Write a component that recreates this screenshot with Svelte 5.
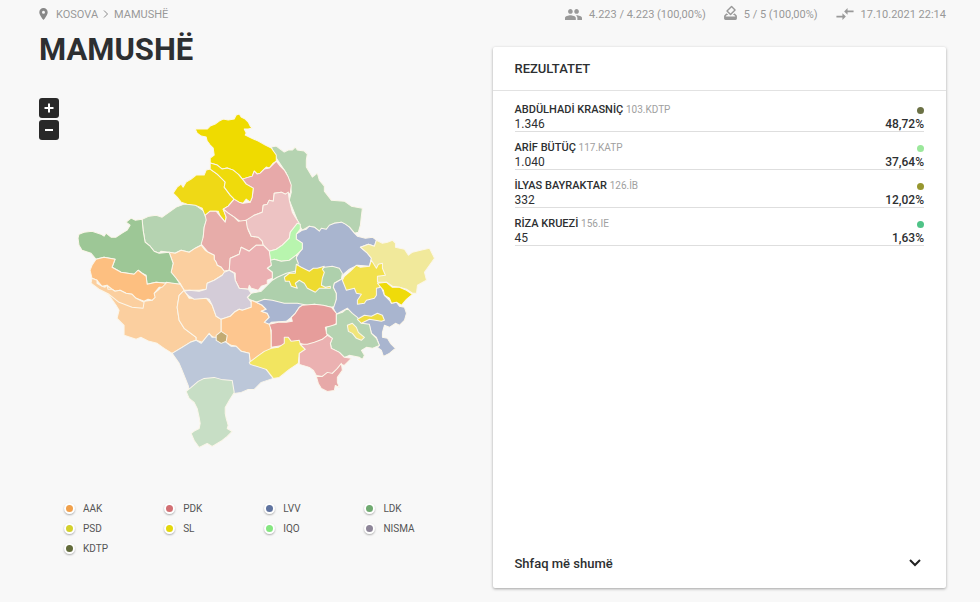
<script lang="ts">
  interface Region {
    name: string;
    fill: string;
    points: string;
  }

  interface Candidate {
    name: string;
    list: string;
    votes: string;
    percent: string;
    color: string;
  }

  const legend = [
    { label: 'AAK', color: '#f0a04b' },
    { label: 'PDK', color: '#d26f73' },
    { label: 'LVV', color: '#5f739f' },
    { label: 'LDK', color: '#6faa70' },
    { label: 'PSD', color: '#d3d02c' },
    { label: 'SL', color: '#e3d70c' },
    { label: 'IQO', color: '#85e680' },
    { label: 'NISMA', color: '#8d8598' },
    { label: 'KDTP', color: '#626b3a' }
  ];

  const candidates: Candidate[] = [
    { name: 'ABDÜLHADİ KRASNİÇ', list: '103.KDTP', votes: '1.346', percent: '48,72%', color: '#6b7145' },
    { name: 'ARİF BÜTÜÇ', list: '117.KATP', votes: '1.040', percent: '37,64%', color: '#9be89b' },
    { name: 'İLYAS BAYRAKTAR', list: '126.İB', votes: '332', percent: '12,02%', color: '#97972f' },
    { name: 'RİZA KRUEZİ', list: '156.IE', votes: '45', percent: '1,63%', color: '#4fc387' }
  ];

  // Drawn in order, small municipalities on top of their neighbours
  const regions: Region[] = [
    { name: 'Podujevë', fill: '#b5d3b1', points: '272,147 277,146 281,149 285,152 289,150 293,150 296,147 298,150 305,151 308,154 307,160 307,167 310,172 313,177 318,173 320,180 325,186 325,191 332,200 345,201 352,206 363,208 362,216 361,225 359,232 355,233 350,227 342,222 335,223 327,229 320,231 315,227 310,226 303,230 300,225 296,215 290,200 292,192 291,183 287,173 277,158' },
    { name: 'Leposaviq', fill: '#efdb00', points: '196,129 208,129 211,126 216,124 220,121 224,119 229,120 235,119 237,115 240,114 242,117 246,119 249,122 251,126 253,128 249,129 245,129 247,133 246,135 252,138 259,141 266,145 272,148 277,155 277,161 274,163 270,168 267,167 265,169 261,173 258,174 255,171 253,176 243,179 240,175 237,173 234,170 228,168 223,169 218,165 211,163 211,158 215,155 214,148 211,145 208,141 207,137 202,136 198,133' },
    { name: 'Istog', fill: '#b5d3b1', points: '143,219 150,216 157,215 163,217 170,212 177,207 185,204 195,204 206,212 208,218 205,227 204,237 206,240 202,245 198,247 190,252 182,250 176,253 170,252 162,251 160,253 155,251 151,246 146,242 144,230' },
    { name: 'Zubin Potok', fill: '#efd916', points: '174,193 178,187 182,184 184,187 187,182 192,179 197,175 205,175 207,170 211,169 218,174 223,178 226,182 225,187 231,195 235,199 229,206 224,209 227,217 226,222 221,216 219,211 217,211 211,211 206,216 203,208 196,205 188,204 182,202 178,197' },
    { name: 'Mitrovicë', fill: '#e7a9a9', points: '277,161 281,166 285,170 289,177 292,185 291,193 286,194 282,192 275,193 274,201 270,200 268,204 264,205 263,212 255,215 252,218 247,221 242,222 235,217 229,213 224,209 229,206 235,199 240,202 244,203 251,202 253,197 254,188 247,184 243,179 253,176 255,171 258,174 261,173 265,169 270,168' },
    { name: 'Mitrovicë Veriore', fill: '#efdb0c', points: '211,163 218,165 223,169 228,168 234,170 239,174 244,180 247,184 254,188 253,197 251,202 247,199 244,203 240,202 235,199 231,195 225,187 226,182 218,174 211,169' },
    { name: 'Skënderaj', fill: '#e7aca9', points: '206,215 211,211 217,211 221,216 226,222 227,217 224,209 229,213 235,217 239,221 247,220 249,230 252,236 259,237 263,241 264,245 257,245 250,251 242,247 240,254 231,258 230,270 225,271 222,267 218,265 217,262 215,259 215,255 209,252 202,244 204,237 205,227 207,220' },
    { name: 'Vushtrri', fill: '#edc3c3', points: '274,201 275,193 282,192 286,194 289,192 290,200 293,212 296,217 300,223 298,224 291,232 290,238 283,245 277,249 270,251 267,248 264,245 263,241 259,237 252,236 248,227 247,220 255,215 263,212 264,205 268,204 270,200' },
    { name: 'Prishtinë', fill: '#a9b5cf', points: '297,234 303,230 307,229 310,226 315,227 320,231 322,228 327,229 330,225 335,223 342,222 346,224 350,227 355,233 358,236 366,238 373,237 377,240 375,246 369,244 361,247 368,253 372,258 371,266 358,265 350,269 343,275 325,275 310,272 297,266 297,257 303,248 303,243 297,239' },
    { name: 'Obiliq', fill: '#b8f5ae', points: '298,223 301,224 301,229 297,234 297,239 303,243 303,249 298,254 294,258 290,260 282,261 275,259 271,261 270,251 277,249 283,245 290,238 291,232' },
    { name: 'Fushë Kosovë', fill: '#aed0ac', points: '271,260 275,259 282,261 290,260 298,254 297,258 299,263 296,273 290,275 280,278 273,280 273,272 268,268 272,265' },
    { name: 'Lipjan', fill: '#aed0ac', points: '248,298 252,293 262,291 268,285 273,280 278,277 287,273 300,270 318,272 325,267 333,266 340,268 343,273 342,279 335,283 334,287 337,293 337,299 336,306 332,307 327,306 315,304 308,306 298,304 285,304 273,301 258,302 252,300' },
    { name: 'Graçanicë', fill: '#eedb2f', points: '285,277 290,273 296,273 297,264 302,267 310,271 314,268 318,268 325,266 323,269 325,272 323,278 322,285 326,287 331,286 331,288 320,288 316,292 312,290 308,288 305,283 300,280 296,283 298,288 292,286 290,281 286,281' },
    { name: 'Drenas', fill: '#ebb0b2', points: '270,251 267,248 264,245 257,245 250,251 242,247 240,254 231,258 230,270 236,273 236,280 240,288 249,289 250,285 252,288 259,290 262,286 268,284 268,280 273,278 273,272 268,268 272,265 271,258' },
    { name: 'Gjilan', fill: '#a9b5cf', points: '334,287 335,283 342,279 348,275 370,280 382,287 385,295 390,300 392,303 397,302 400,306 405,307 407,313 405,320 400,325 396,323 390,327 385,325 383,332 383,337 388,338 391,343 396,348 390,353 384,356 382,350 378,347 380,345 377,337 372,333 370,325 360,322 348,308 337,314 334,308 337,299 337,293' },
    { name: 'Kamenicë', fill: '#f1e99b', points: '361,247 369,244 375,246 377,240 383,243 388,242 393,240 396,243 396,247 405,249 409,255 413,252 421,250 430,248 435,258 430,265 425,272 427,280 418,285 417,293 413,293 407,289 400,287 393,286 387,282 378,282 377,276 370,266 372,258 368,253' },
    { name: 'Novobërdë', fill: '#f2e14c', points: '343,280 345,276 351,271 357,265 361,267 370,266 372,260 377,268 379,264 383,263 383,268 386,275 378,276 378,281 381,287 377,288 377,295 375,298 367,300 365,303 358,304 358,300 362,294 357,293 355,288 347,290' },
    { name: 'Ranillug', fill: '#efdb0a', points: '378,283 387,282 393,287 400,287 407,290 413,294 407,299 402,305 397,302 392,303 390,298 385,295 384,290' },
    { name: 'Klinë', fill: '#fbcf9f', points: '170,252 176,253 182,250 190,252 196,248 202,245 206,250 209,252 215,255 215,259 217,262 218,265 222,267 225,271 230,270 223,275 215,280 208,283 207,289 200,290 185,290 181,283 176,277 172,272 174,263' },
    { name: 'Pejë', fill: '#9dc796', points: '79,238 80,234 85,232 93,231 102,234 105,236 107,233 112,237 117,237 123,233 128,230 131,225 127,222 132,218 136,220 143,219 144,230 146,242 151,246 155,251 160,253 170,252 174,263 172,272 177,278 181,284 170,283 157,282 148,284 147,275 143,273 139,270 135,274 122,272 113,267 116,259 105,257 97,259 92,253 83,250 80,245' },
    { name: 'Gjakovë', fill: '#fbcf9f', points: '100,286 113,287 127,293 145,301 153,300 155,293 160,289 167,282 181,284 185,290 180,295 178,307 180,320 185,328 197,337 197,340 191,342 183,347 173,353 165,348 158,343 150,341 142,337 137,339 125,335 125,325 120,320 118,318 120,310 117,305 110,295' },
    { name: 'Deçan', fill: '#fdbf80', points: '97,259 105,257 116,259 113,267 122,272 135,274 139,270 143,273 147,276 148,284 157,282 167,283 163,287 160,287 155,293 156,297 153,300 149,299 145,301 137,298 133,294 127,293 121,290 116,291 113,289 108,285 103,286 98,280 93,278 91,270 93,265' },
    { name: 'Junik', fill: '#fbcf9f', points: '93,278 98,280 98,283 103,286 106,287 108,285 109,289 113,289 116,291 121,290 127,293 133,294 137,298 145,302 144,308 133,307 120,302 110,294 100,289 92,283' },
    { name: 'Rahovec', fill: '#fbcf9f', points: '185,290 190,298 207,298 213,305 217,316 222,319 222,335 216,338 210,334 203,342 197,340 197,337 185,328 180,320 178,307 180,295' },
    { name: 'Malishevë', fill: '#d4ccd8', points: '185,291 190,290 200,291 207,289 208,283 215,280 223,275 225,272 230,270 235,273 236,280 240,288 249,289 252,293 248,297 252,302 252,307 243,310 240,309 235,312 231,316 222,319 217,316 213,305 210,299 207,298 195,299 190,296' },
    { name: 'Suharekë', fill: '#fdc68f', points: '222,319 231,316 235,312 240,309 243,310 252,307 252,300 257,302 263,305 267,309 262,311 268,313 270,317 266,321 271,324 272,335 272,348 260,356 251,363 250,353 242,351 237,346 232,345 227,342 222,335' },
    { name: 'Shtime', fill: '#a9b5d0', points: '257,302 265,299 273,300 285,303 298,303 308,305 300,307 296,313 292,317 287,321 272,322 270,324 265,322 270,317 268,313 262,311 267,309 263,305' },
    { name: 'Ferizaj', fill: '#e69d9b', points: '303,305 315,304 324,305 332,307 337,313 337,323 333,326 326,327 328,335 323,339 315,343 307,345 300,343 285,345 272,347 272,330 270,324 279,322 287,322 293,321 292,317 296,313 300,307' },
    { name: 'Viti', fill: '#b5d3b1', points: '337,314 343,312 348,308 353,313 358,317 362,323 370,324 372,333 377,338 380,345 373,348 367,347 362,350 365,355 363,359 360,357 350,355 345,357 340,352 332,348 331,343 333,338 327,333 327,327 337,324' },
    { name: 'Partesh', fill: '#eedc40', points: '358,319 365,315 372,316 378,313 383,315 385,320 382,321 370,319 362,323' },
    { name: 'Kllokot', fill: '#f1e57a', points: '348,325 353,323 357,327 359,332 365,337 362,340 357,338 353,333 349,331' },
    { name: 'Prizren', fill: '#bcc7d9', points: '173,353 183,347 191,342 197,340 202,343 206,338 210,333 213,337 217,337 227,342 232,346 237,346 242,351 250,353 251,363 258,365 267,369 274,378 262,382 255,389 249,389 242,392 235,393 190,390 189,385 187,380 183,370 180,363' },
    { name: 'Shtërpcë', fill: '#f2e560', points: '250,362 258,356 265,351 272,348 279,347 285,343 285,337 289,337 292,341 300,340 301,344 306,349 300,353 299,363 290,369 285,373 280,377 274,378 267,369 251,364' },
    { name: 'Kaçanik', fill: '#ebb1b1', points: '301,344 308,344 315,342 323,339 328,335 333,338 331,343 332,348 340,352 345,357 352,358 345,365 342,364 338,369 333,373 328,373 323,376 317,375 314,370 310,367 300,364 300,353 306,349' },
    { name: 'Hani i Elezit', fill: '#e7a9a8', points: '317,376 323,376 328,372 333,373 338,368 342,363 343,370 338,377 338,382 340,387 336,385 335,390 328,391 322,388 319,383' },
    { name: 'Dragash', fill: '#c7dec5', points: '187,391 192,387 199,381 205,378 215,377 222,379 233,380 235,392 230,400 226,407 226,413 227,418 229,425 228,428 233,431 228,436 223,440 213,446 208,443 200,447 195,440 192,433 196,430 200,428 201,423 200,417 198,408 195,402 190,398' },
    { name: 'Mamushë', fill: '#c2aa72', points: '217,335 222,331 228,335 227,341 222,343 217,340' }
  ];
</script>

<div class="page">
  <header class="topbar">
    <nav class="breadcrumb">
      <svg class="pin" viewBox="5 2 14 20" aria-hidden="true">
        <path d="M12 2C8.13 2 5 5.13 5 9c0 5.25 7 13 7 13s7-7.75 7-13c0-3.87-3.13-7-7-7zm0 9.500a2.500 2.500 0 1 1 0-5 2.500 2.500 0 0 1 0 5z" />
      </svg>
      <a href="#kosova">KOSOVA</a>
      <svg class="chevron" viewBox="0 0 6 8" aria-hidden="true"><path d="M1 0.500 4.500 4 1 7.500" /></svg>
      <a href="#mamushe">MAMUSHË</a>
    </nav>
    <div class="stats">
      <span class="stat">
        <svg class="people" viewBox="1 5 22 14" aria-hidden="true">
          <path d="M16 11c1.660 0 2.990-1.340 2.990-3S17.660 5 16 5s-3 1.340-3 3 1.340 3 3 3zm-8 0c1.660 0 2.990-1.340 2.990-3S9.660 5 8 5 5 6.340 5 8s1.340 3 3 3zm0 2c-2.330 0-7 1.170-7 3.500V19h14v-2.500C15 14.170 10.330 13 8 13zm8 0c-.29 0-.62.020-.97.050 1.160.84 1.970 1.970 1.970 3.450V19h6v-2.500c0-2.330-4.670-3.500-7-3.500z" />
        </svg>
        4.223 / 4.223 (100,00%)
      </span>
      <span class="stat">
        <svg class="ballot" viewBox="3 1 18 21" aria-hidden="true">
          <path d="M18 13h-.68l-2 2h1.910L19 17H5l1.780-2h2.050l-2-2H6l-3 3v4c0 1.100.89 2 1.990 2H19a2 2 0 0 0 2-2v-4l-3-3zm-1-5.050-4.950 4.950-3.540-3.540 4.950-4.950L17 7.950zm-4.240-5.660L6.390 8.660a1 1 0 0 0 0 1.410l4.950 4.950c.39.39 1.020.39 1.410 0l6.360-6.360a1 1 0 0 0 0-1.410L14.160 2.300a.98.98 0 0 0-1.400-.010z" />
        </svg>
        5 / 5 (100,00%)
      </span>
      <span class="stat">
        <svg class="arrows" viewBox="2 5 20 14" aria-hidden="true">
          <path d="m9.010 14-7.010 0v2h7.010v3L13 15l-3.990-4v3zm5.980-1v-3H22V8h-7.010V5L11 9l3.990 4z" />
        </svg>
        17.10.2021 22:14
      </span>
    </div>
  </header>

  <div class="columns">
    <section class="overview">
      <h1>MAMUSHË</h1>
      <div class="map-row">
        <div class="zoom">
          <button type="button" aria-label="Zoom in">
            <svg viewBox="0 0 10 10"><path d="M5 0.500v9M0.500 5h9" /></svg>
          </button>
          <button type="button" aria-label="Zoom out">
            <svg viewBox="0 0 10 10"><path d="M1 5h8" /></svg>
          </button>
        </div>
        <svg class="map" viewBox="78 98 360 360" role="img" aria-label="Kosova">
          {#each regions as region}
            <polygon points={region.points} fill={region.fill}><title>{region.name}</title></polygon>
          {/each}
        </svg>
      </div>
      <ul class="legend">
        {#each legend as item}
          <li><span class="marker" style="background: {item.color}"></span>{item.label}</li>
        {/each}
      </ul>
    </section>

    <section class="panel">
      <h2>REZULTATET</h2>
      <ul class="results">
        {#each candidates as candidate}
          <li>
            <div class="line">
              <span><strong>{candidate.name}</strong> <small>{candidate.list}</small></span>
              <span class="dot" style="background: {candidate.color}"></span>
            </div>
            <div class="line votes">
              <span>{candidate.votes}</span>
              <b>{candidate.percent}</b>
            </div>
          </li>
        {/each}
      </ul>
      <button type="button" class="more">
        Shfaq më shumë
        <svg viewBox="0 0 12 8" aria-hidden="true"><path d="M1 1l5 5 5-5" /></svg>
      </button>
    </section>
  </div>
</div>

<style>
  :global(body) {
    background: #f8f8f8;
    color: #2d2f31;
    font-family: Roboto, sans-serif;
  }

  ul {
    list-style: none;
    margin: 0;
    padding: 0;
  }

  .page {
    padding: 0 34px 14px 39px;
  }

  .topbar {
    display: flex;
    justify-content: space-between;
    height: 28px;
    color: #999;
    font-size: 11px;
  }

  .topbar svg {
    fill: #999;
  }

  .breadcrumb,
  .stats,
  .stat {
    display: flex;
    align-items: center;
  }

  .breadcrumb a {
    color: inherit;
    text-decoration: none;
  }

  .breadcrumb .pin {
    width: 9px;
    height: 12px;
    margin-right: 8px;
    fill: #888;
  }

  .breadcrumb .chevron {
    width: 6px;
    height: 8px;
    margin: 0 5px;
    fill: none;
    stroke: #888;
  }

  .stats {
    gap: 18px;
  }

  .stat {
    gap: 7px;
  }

  .people {
    width: 17px;
    height: 11px;
  }

  .ballot {
    width: 13px;
    height: 15px;
    margin-bottom: 4px;
  }

  .arrows {
    width: 18px;
    height: 12px;
  }

  .columns {
    display: grid;
    grid-template-columns: 1fr 1fr;
  }

  h1 {
    margin: 3px 0 29px;
    font-size: 31px;
    line-height: 38px;
    font-weight: 700;
  }

  .map-row {
    display: flex;
    align-items: flex-start;
    gap: 18px;
  }

  .zoom {
    display: flex;
    flex-direction: column;
    gap: 2px;
  }

  .zoom button {
    display: flex;
    align-items: center;
    justify-content: center;
    width: 20px;
    height: 20px;
    padding: 0;
    border: 0;
    border-radius: 3px;
    background: #292929;
  }

  .zoom svg {
    width: 10px;
    height: 10px;
    stroke: #fff;
    stroke-width: 2;
  }

  .map {
    flex: 1;
    margin-right: 55px;
  }

  .map polygon {
    stroke: #fbf6ea;
    stroke-width: 1;
    stroke-linejoin: round;
  }

  .legend {
    display: grid;
    grid-template-columns: repeat(4, 1fr);
    margin: 40px 28px 0 25px;
    font-size: 10px;
    line-height: 20px;
    color: #555;
  }

  .legend li {
    display: flex;
    align-items: center;
    gap: 8px;
  }

  .marker {
    width: 7px;
    height: 7px;
    border: 2px solid #fff;
    border-radius: 50%;
    box-shadow: 0 1px 2px rgba(0, 0, 0, 0.3);
  }

  .panel {
    display: flex;
    flex-direction: column;
    margin-top: 19px;
    min-height: 541px;
    background: #fff;
    border-radius: 2px;
    box-shadow: 0 1px 3px rgba(0, 0, 0, 0.35);
  }

  h2 {
    margin: 0;
    padding: 0 22px;
    border-bottom: 1px solid #e2e2e2;
    font-size: 13px;
    line-height: 43px;
    font-weight: 500;
  }

  .results {
    padding: 6px 22px;
  }

  .results li {
    padding-top: 6px;
    border-bottom: 1px solid #dedede;
    margin-bottom: 3px;
  }

  .line {
    display: flex;
    align-items: center;
    justify-content: space-between;
    font-size: 11px;
    line-height: 14px;
  }

  .votes {
    font-size: 12px;
  }

  .results strong {
    font-size: 11px;
    font-weight: 500;
  }

  .results small {
    font-size: 10px;
    color: #a0a0a0;
  }

  .results b {
    font-weight: 500;
  }

  .dot {
    width: 7px;
    height: 7px;
    border-radius: 50%;
  }

  .more {
    display: flex;
    align-items: center;
    justify-content: space-between;
    margin-top: auto;
    padding: 0 25px 0 22px;
    height: 50px;
    border: 0;
    background: none;
    color: inherit;
    font: 500 13px Roboto, sans-serif;
  }

  .more svg {
    width: 12px;
    height: 8px;
    fill: none;
    stroke: #222;
    stroke-width: 2;
  }
</style>
